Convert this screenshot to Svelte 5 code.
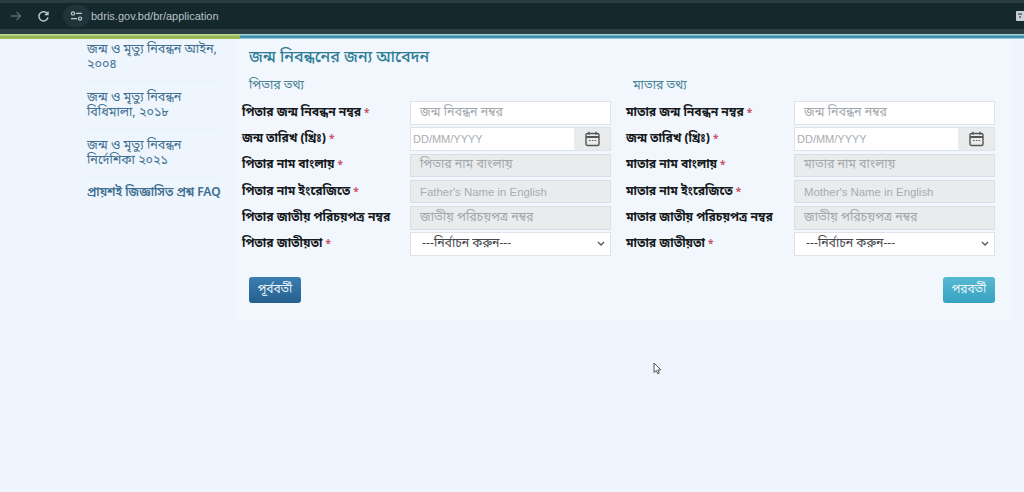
<script>
  const nav = [
    'জন্ম ও মৃত্যু নিবন্ধন আইন, ২০০৪',
    'জন্ম ও মৃত্যু নিবন্ধন বিধিমালা, ২০১৮',
    'জন্ম ও মৃত্যু নিবন্ধন নির্দেশিকা ২০২১'
  ];
  const columns = [
    { title: 'পিতার তথ্য', who: 'পিতার', en: "Father's Name in English" },
    { title: 'মাতার তথ্য', who: 'মাতার', en: "Mother's Name in English" }
  ];
</script>

<div class="page">
  <header class="chrome">
    <svg class="back" width="12" height="12" viewBox="0 0 12 12" fill="none" stroke="#5c6b6e" stroke-width="1.3"><path d="M1 6h9.500M6.500 2l4 4-4 4"/></svg>
    <svg class="reload" width="13" height="13" viewBox="0 0 13 13" fill="none" stroke="#c3cacb" stroke-width="1.4"><path d="M10.600 4.200A4.600 4.600 0 1 0 11 7.400"/><path d="M11 1.400v3.200H7.800" /></svg>
    <div class="omni">
      <span class="pill">
        <svg width="13" height="10" viewBox="0 0 13 10" fill="none" stroke="#c3cacb" stroke-width="1.2"><circle cx="3" cy="2.400" r="1.600"/><path d="M6 2.400h6M1 7.600h6"/><circle cx="10" cy="7.600" r="1.600"/></svg>
      </span>
      <span class="url">bdris.gov.bd/br/application</span>
    </div>
    <span class="translate">
      <svg width="8" height="12" viewBox="0 0 8 12"><rect x="0" y="1" width="12" height="10" rx="1" fill="#c9d0d1"/><path d="M2 4h4M3 7h2" stroke="#16282c" stroke-width="1"/></svg>
    </span>
  </header>
  <div class="stripe"><span class="green"></span><span class="blue"></span></div>

  <div class="body">
    <nav class="side">
      {#each nav as item}
        <a class="link" href="#top">{item}</a>
      {/each}
      <a class="link faq" href="#top">প্রায়শই জিজ্ঞাসিত প্রশ্ন FAQ</a>
    </nav>

    <main class="panel">
      <h1>জন্ম নিবন্ধনের জন্য আবেদন</h1>
      <div class="cols">
        {#each columns as c}
          <section class="col">
            <h2>{c.title}</h2>
            <div class="row">
              <span class="lab">{c.who} জন্ম নিবন্ধন নম্বর<i>*</i></span>
              <div class="ctl"><span class="ph bn">জন্ম নিবন্ধন নম্বর</span></div>
            </div>
            <div class="row">
              <span class="lab">জন্ম তারিখ (খ্রিঃ)<i>*</i></span>
              <div class="ctl date">
                <span class="ph en tight">DD/MM/YYYY</span>
                <span class="addon">
                  <svg width="15" height="16" viewBox="0 0 15 16" fill="none" stroke="#555" stroke-width="1.4"><rect x="1" y="2.500" width="13" height="12" rx="1.500"/><path d="M1 6h13" stroke-width="2"/><path d="M4 .8v3M11 .8v3"/><path d="M4 9.500h1.500M6.800 9.500h1.500M9.600 9.500h1.500" stroke-width="1"/></svg>
                </span>
              </div>
            </div>
            <div class="row">
              <span class="lab">{c.who} নাম বাংলায়<i>*</i></span>
              <div class="ctl off"><span class="ph bn">{c.who} নাম বাংলায়</span></div>
            </div>
            <div class="row">
              <span class="lab">{c.who} নাম ইংরেজিতে<i>*</i></span>
              <div class="ctl off"><span class="ph en">{c.en}</span></div>
            </div>
            <div class="row">
              <span class="lab">{c.who} জাতীয় পরিচয়পত্র নম্বর</span>
              <div class="ctl off"><span class="ph bn">জাতীয় পরিচয়পত্র নম্বর</span></div>
            </div>
            <div class="row">
              <span class="lab">{c.who} জাতীয়তা<i>*</i></span>
              <div class="ctl select">
                <span class="val">---নির্বাচন করুন---</span>
                <svg width="8" height="6" viewBox="0 0 8 6" fill="none" stroke="#555" stroke-width="1.300"><path d="M1 1l3 3 3-3"/></svg>
              </div>
            </div>
          </section>
        {/each}
      </div>
      <div class="actions">
        <button class="btn prev">পূর্ববর্তী</button>
        <button class="btn next">পরবর্তী</button>
      </div>
    </main>
  </div>

  <svg class="cursor" width="9" height="13" viewBox="0 0 9 13" fill="#fff" stroke="#555" stroke-width="1"><path d="M1 1v9.500l2.300-2 1.500 3.300 1.500-.7-1.500-3.200h3z"/></svg>
</div>

<style>
  :global(body) { margin: 0; background: #eef5fc; }
  .page {
    position: relative;
    width: 1024px;
    height: 492px;
    overflow: hidden;
    background: #eef5fc;
    font-family: "Noto Sans Bengali", "Noto Sans", "Liberation Sans", sans-serif;
  }
  .chrome {
    box-sizing: border-box;
    height: 34px;
    display: flex;
    align-items: center;
    background: #15282c;
    border-top: 3px solid #2a3d40;
    border-bottom: 5px solid #2c3f42;
    padding-left: 10px;
  }
  .reload { margin-left: 15px; }
  .omni {
    margin-left: 13px;
    display: flex;
    align-items: center;
    flex: 1;
  }
  .pill {
    box-sizing: border-box;
    width: 27px;
    height: 22px;
    margin-right: 1px;
    border-radius: 11px;
    background: #203539;
    display: flex;
    align-items: center;
    justify-content: center;
  }
  .url {
    font: 11px "Liberation Sans", sans-serif;
    color: #b9c2c4;
  }
  .translate { width: 8px; display: flex; overflow: hidden; }
  .stripe { height: 5px; display: flex; }
  .green { width: 240px; background: linear-gradient(#cfe3a0, #8db04a 60%, #a9c66a); }
  .blue { flex: 1; background: linear-gradient(#bfeaf2, #1f7a99 60%, #bfe0ea); }
  .body { display: flex; align-items: flex-start; }
  .side {
    box-sizing: border-box;
    width: 235px;
    padding: 3px 17px 0 87px;
    display: flex;
    flex-direction: column;
  }
  .link {
    box-sizing: border-box;
    font-size: 12.600px;
    line-height: 15px;
    height: 40px;
    color: #3f6f92;
    text-decoration: none;
    margin-bottom: 8px;
    border-bottom: 1px solid #e8f0f7;
    font-weight: 400;
  }
  .faq { border: 0; font-weight: 600; font-size: 12px; height: auto; white-space: nowrap; }
  .panel {
    box-sizing: border-box;
    width: 775px;
    height: 281px;
    background: #f1f7fc;
    padding: 8px 14px 0 7px;
    display: flex;
    flex-direction: column;
  }
  h1 {
    margin: 0 0 0 7px;
    font-size: 16px;
    line-height: 22px;
    font-weight: 500;
    color: #2f7d96;
  }
  .cols { display: grid; grid-template-columns: 369px 369px; column-gap: 15px; margin-top: 9px; }
  .col h2 {
    margin: 0 0 0 7px;
    height: 23px;
    font-size: 12.400px;
    line-height: 16px;
    font-weight: 400;
    color: #4a8296;
  }
  .row {
    display: grid;
    grid-template-columns: 168px 201px;
    align-items: center;
    height: 23.500px;
    margin-bottom: 2.800px;
  }
  .lab { font-size: 12.100px; font-weight: 700; color: #16191c; white-space: nowrap; }
  .lab i { color: #c9566c; font-style: normal; font-size: 10px; margin-left: 3px; }
  .ctl {
    box-sizing: border-box;
    height: 23.500px;
    background: #fff;
    border: 1px solid #dde3e8;
    display: flex;
    align-items: center;
    overflow: hidden;
    padding-left: 9px;
  }
  .off { background: #e9ebec; border-color: #dadee2; }
  .ph { color: #a3a8ad; white-space: nowrap; }
  .bn { font-size: 12.400px; }
  .en { font: 11.400px "Liberation Sans", sans-serif; color: #a8acb0; }
  .date { padding-left: 2px; }
  .tight { flex: 1; font-size: 11px; }
  .addon {
    width: 36px;
    height: 100%;
    background: #e9ebec;
    display: flex;
    align-items: center;
    justify-content: center;
  }
  .select { justify-content: space-between; padding: 0 5px 0 11px; }
  .val { font-size: 12.300px; color: #43484c; }
  .actions { display: flex; justify-content: space-between; margin-top: 18px; padding: 0 0 0 7px; width: 746px; }
  .btn {
    box-sizing: border-box;
    width: 52px;
    height: 26px;
    border: 0;
    border-radius: 3px;
    color: #e9f3f8;
    font: inherit;
    font-size: 12px;
    padding: 0;
  }
  .prev { background: linear-gradient(#3a7fb0, #255f8d); }
  .next { background: linear-gradient(#55b9d2, #38a3c0); }
  .cursor { position: absolute; left: 653px; top: 362px; }
</style>
